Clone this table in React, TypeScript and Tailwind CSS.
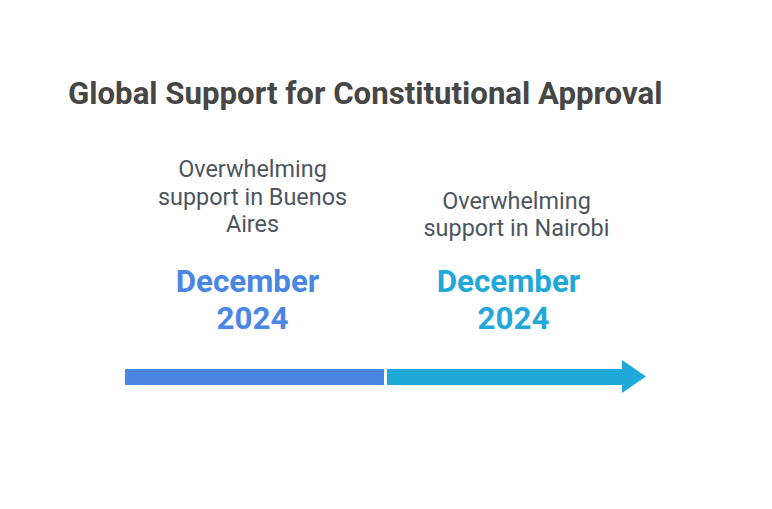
export default function App() {
  return (
    <div className="w-[772px] h-[509px] bg-white pt-[76px] pl-[68px] font-['Roboto',sans-serif]">
      <h1 className="text-[31.2px] leading-[36px] font-bold text-[#464646]">
        Global Support for Constitutional Approval
      </h1>

      <div className="mt-[44px] ml-[57px] flex gap-[3px]">
        {/* Buenos Aires */}
        <div className="w-[259px] flex flex-col items-center">
          <div className="h-[89px] flex flex-col justify-end">
            <p className="w-[200px] pb-[6px] mr-[4px] text-center text-[23.4px] leading-[27.6px] text-[#4c5561]">
              Overwhelming support in Buenos Aires
            </p>
          </div>
          <p className="mt-[18px] w-[200px] mr-[4px] text-center text-[31.3px] leading-[37px] font-bold text-[#4a86e4]">
            <span className="pr-[10px]">December</span>
            <br />
            2024
          </p>
          <div className="mt-[23px] h-[33px] w-full flex items-center">
            <div className="h-[16px] w-full bg-[#4a86e4]" />
          </div>
        </div>

        {/* Nairobi */}
        <div className="w-[259px] flex flex-col items-center">
          <div className="h-[89px] flex flex-col justify-end">
            <p className="w-[200px] pb-[2px] text-center text-[23.4px] leading-[27.6px] text-[#4c5561]">
              Overwhelming support in Nairobi
            </p>
          </div>
          <p className="mt-[18px] w-[200px] mr-[6px] text-center text-[31.3px] leading-[37px] font-bold text-[#1fa8d8]">
            <span className="pr-[10px]">December</span>
            <br />
            2024
          </p>
          <div className="mt-[23px] h-[33px] w-full flex items-center">
            <div className="h-[16px] flex-1 bg-[#1fa8d8]" />
            <svg width="24" height="33" viewBox="0 0 24 33" className="shrink-0">
              <polygon points="0,0 24,16.5 0,33" fill="#1fa8d8" />
            </svg>
          </div>
        </div>
      </div>
    </div>
  );
}
